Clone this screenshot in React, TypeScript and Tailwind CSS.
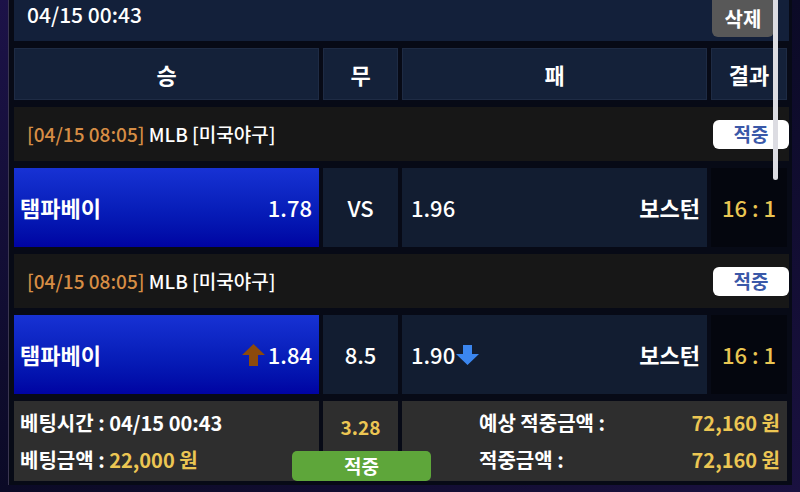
const FONT = "font-['Noto_Sans_CJK_KR','Noto_Sans',sans-serif]";

function ArrowUp() {
  return (
    <svg width="23" height="22" viewBox="0 0 23 22" className="shrink-0">
      <polygon points="11.5,0 23,11 16,11 16,22 7,22 7,11 0,11" fill="#8c4a0c" />
    </svg>
  );
}

function ArrowDown() {
  return (
    <svg width="23" height="20" viewBox="0 0 23 20" className="shrink-0">
      <polygon points="7,0 16,0 16,9 23,9 11.5,20 0,9 7,9" fill="#3b86ef" />
    </svg>
  );
}

function Badge() {
  return (
    <span className="flex h-[29px] w-[76px] items-center justify-center rounded-[6px] bg-white text-[19px] font-bold text-[#3a58a8]">
      적중
    </span>
  );
}

function LeagueRow() {
  return (
    <div className="flex h-[54px] items-center justify-between bg-[#171717] pl-[13px]">
      <span className="text-[19px] font-medium text-white">
        <span className="text-[#d68d45]">[04/15 08:05]</span> MLB [미국야구]
      </span>
      <Badge />
    </div>
  );
}

type Match = {
  home: string;
  homeOdd: string;
  draw: string;
  awayOdd: string;
  away: string;
  score: string;
  arrows?: boolean;
};

function MatchRow({ m }: { m: Match }) {
  return (
    <div className="grid h-[79px] grid-cols-[305px_75px_305px_76px] gap-x-[4px] text-[22px] font-bold text-white">
      <div className="flex items-center justify-between bg-gradient-to-b from-[#1732d4] to-[#0003a2] pl-[6px] pr-[7px]">
        <span>{m.home}</span>
        <span className="flex items-center gap-[3px]">
          {m.arrows && <ArrowUp />}
          <span className="font-medium">{m.homeOdd}</span>
        </span>
      </div>
      <div className="flex items-center justify-center bg-[#121d31] font-medium">{m.draw}</div>
      <div className="flex items-center justify-between bg-[#121d31] pl-[9px] pr-[7px]">
        <span className="flex items-center gap-[1px] font-medium">
          {m.awayOdd}
          {m.arrows && <ArrowDown />}
        </span>
        <span>{m.away}</span>
      </div>
      <div className="flex items-center justify-center bg-[#04060e] font-medium text-[#e9c552]">{m.score}</div>
    </div>
  );
}

const MATCHES: Match[] = [
  { home: "탬파베이", homeOdd: "1.78", draw: "VS", awayOdd: "1.96", away: "보스턴", score: "16 : 1" },
  { home: "탬파베이", homeOdd: "1.84", draw: "8.5", awayOdd: "1.90", away: "보스턴", score: "16 : 1", arrows: true },
];

export default function App() {
  return (
    <div className={`relative h-[492px] w-[800px] overflow-hidden bg-gradient-to-br from-[#1c1248] via-[#0b0a26] to-[#1a1140] ${FONT}`}>
      {/* Panel */}
      <div className="ml-[8px] mr-[8px] flex h-[485px] flex-col gap-[7px] border-l border-[#3a3650] bg-[#070a16] pl-[5px] pr-[3px]">
        {/* Top header */}
        <div className="flex h-[41px] items-start justify-between bg-[#13203a] pl-[13px]">
          <span className="mt-[2px] text-[21px] leading-[24px] font-medium text-white">04/15 00:43</span>
          <span className="mr-[15px] flex h-[37px] w-[62px] items-center justify-center rounded-b-[6px] bg-[#585858] text-[20px] font-bold text-white">
            삭제
          </span>
        </div>

        {/* Column headers */}
        <div className="grid h-[52px] grid-cols-[305px_75px_305px_76px] gap-x-[4px] text-[22px] font-bold text-white">
          {["승", "무", "패", "결과"].map((h) => (
            <div key={h} className="flex items-center justify-center border border-[#1e2b44] bg-[#142139]">
              {h}
            </div>
          ))}
        </div>

        <LeagueRow />
        <MatchRow m={MATCHES[0]} />
        <LeagueRow />
        <MatchRow m={MATCHES[1]} />

        {/* Summary */}
        <div className="relative grid h-[80px] grid-cols-[305px_75px_385px] gap-x-[4px] text-[20px] font-bold text-white">
          <div className="flex flex-col justify-center gap-[7px] bg-[#2e2e2e] pl-[6px]">
            <span>베팅시간 : <span className="font-semibold">04/15 00:43</span></span>
            <span>
              베팅금액 : <span className="text-[#ecc653]">22,000 원</span>
            </span>
          </div>
          <div className="flex justify-center bg-[#2e2e2e] pt-[12px] text-[19px] font-semibold text-[#ecc653]">3.28</div>
          <div className="flex flex-col justify-center gap-[7px] bg-[#2e2e2e] pl-[77px] pr-[7px]">
            <div className="flex justify-between">
              <span>예상 적중금액 :</span>
              <span className="text-[#ecc653]">72,160 원</span>
            </div>
            <div className="flex justify-between">
              <span>적중금액 :</span>
              <span className="text-[#ecc653]">72,160 원</span>
            </div>
          </div>
          <span className="absolute bottom-0 left-[278px] flex h-[30px] w-[139px] items-center justify-center rounded-[5px] bg-[#5ea63a] text-[19px] font-bold text-white">
            적중
          </span>
        </div>
      </div>

      {/* Scrollbar thumb */}
      <div className="absolute left-[773px] top-[-6px] h-[186px] w-[5px] rounded-full bg-[#dcdce2]" />
    </div>
  );
}
